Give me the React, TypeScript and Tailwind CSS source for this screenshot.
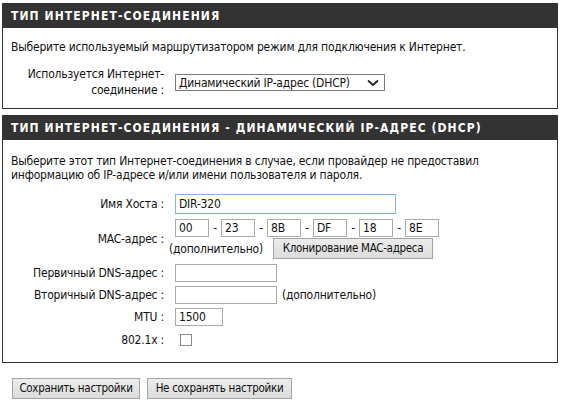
const font = { fontFamily: '"DejaVu Sans Condensed", "DejaVu Sans", sans-serif' };

function Header({ title }: { title: string }) {
  return (
    <div className="h-[25px] bg-[#333333] text-white font-bold text-[12px] pl-[9px] flex items-center tracking-[1.1px]">
      {title}
    </div>
  );
}

function Label({ children }: { children: React.ReactNode }) {
  return <div className="text-right text-[12px] leading-[14px] text-[#111]">{children}</div>;
}

function TextBox({ value = "", w, h = "h-[18px]", focus = false }: { value?: string; w: string; h?: string; focus?: boolean }) {
  return (
    <input
      readOnly
      value={value}
      className={`${w} ${h} border ${focus ? "border-[#7eb4ea]" : "border-[#a9a9a9]"} bg-white px-[3px] text-[12px] tracking-[-0.2px] text-[#111] outline-none`}
    />
  );
}

function MacBox({ value }: { value: string }) {
  return <TextBox value={value} w="w-[34px]" h="h-[18px]" />;
}

function Button({ children, w }: { children: React.ReactNode; w: string }) {
  return (
    <button className={`${w} h-[21px] border border-[#a3a3a3] bg-gradient-to-b from-[#ececec] to-[#dcdcdc] text-[11.5px] tracking-[-0.3px] text-[#111] flex items-center justify-center`}>
      {children}
    </button>
  );
}

export default function App() {
  const mac = ["00", "23", "8B", "DF", "18", "8E"];
  return (
    <div className="w-[562px] h-[402px] bg-white pt-[3px] pl-[2px] pr-[4px] text-[#111] tracking-[-0.2px]" style={font}>
      {/* panel 1 */}
      <Header title="ТИП ИНТЕРНЕТ-СОЕДИНЕНИЯ" />
      <div className="h-[81px] border border-t-0 border-[#333333] pl-[8px]">
        <p className="pt-[12px] text-[12px] leading-[14px]">
          Выберите используемый маршрутизатором режим для подключения к Интернет.
        </p>
        <div className="mt-[12px] grid grid-cols-[153px_1fr] gap-x-[11px] items-start">
          <Label>
            <span className="leading-[16px] block">
              Используется Интернет-
              <br />
              соединение :
            </span>
          </Label>
          <div className="mt-[8px] w-[210px] h-[17px] border border-[#7a7a7a] flex items-center justify-between pl-[3px] pr-[5px] text-[12px] leading-none">
            <span>Динамический IP-адрес (DHCP)</span>
            <svg width="12" height="8" viewBox="0 0 12 8">
              <polyline points="1,1.5 6,6 11,1.5" fill="none" stroke="#222" strokeWidth="1.8" />
            </svg>
          </div>
        </div>
      </div>

      {/* panel 2 */}
      <div className="mt-[6px]">
        <Header title="ТИП ИНТЕРНЕТ-СОЕДИНЕНИЯ - ДИНАМИЧЕСКИЙ IP-АДРЕС (DHCP)" />
        <div className="h-[223px] border border-t-0 border-[#333333] pl-[8px]">
          <p className="pt-[14px] text-[12px] leading-[14px]">
            Выберите этот тип Интернет-соединения в случае, если провайдер не предоставил
            <br />
            информацию об IP-адресе и/или имени пользователя и пароля.
          </p>
          <div className="mt-[12px] grid grid-cols-[153px_1fr] gap-x-[11px] gap-y-[4px] items-center">
            <Label>Имя Хоста :</Label>
            <TextBox value="DIR-320" w="w-[221px]" h="h-[20px]" focus />

            <Label>MAC-адрес :</Label>
            <div className="flex flex-col gap-[1px] pt-[1px] pb-[1px]">
              <div className="flex items-center">
                {mac.map((m, i) => (
                  <div key={m} className="flex items-center">
                    {i > 0 && <span className="w-[12px] text-center text-[12px]">-</span>}
                    <MacBox value={m} />
                  </div>
                ))}
              </div>
              <div className="flex items-center -ml-[6px] gap-[10px]">
                <span className="text-[12px]">(дополнительно)</span>
                <Button w="w-[160px]">Клонирование MAC-адреса</Button>
              </div>
            </div>

            <Label>Первичный DNS-адрес :</Label>
            <TextBox w="w-[102px]" />

            <Label>Вторичный DNS-адрес :</Label>
            <div className="flex items-center gap-[5px]">
              <TextBox w="w-[102px]" />
              <span className="text-[12px]">(дополнительно)</span>
            </div>

            <Label>MTU :</Label>
            <TextBox value="1500" w="w-[48px]" />

            <Label>802.1x :</Label>
            <div className="h-[20px] flex items-center pl-[5px]">
              <div className="w-[12px] h-[12px] border border-[#8a8a8a] bg-white" />
            </div>
          </div>
        </div>
      </div>

      <div className="mt-[15px] ml-[10px] flex gap-[7px]">
        <Button w="w-[128px]">Сохранить настройки</Button>
        <Button w="w-[145px]">Не сохранять настройки</Button>
      </div>
    </div>
  );
}
